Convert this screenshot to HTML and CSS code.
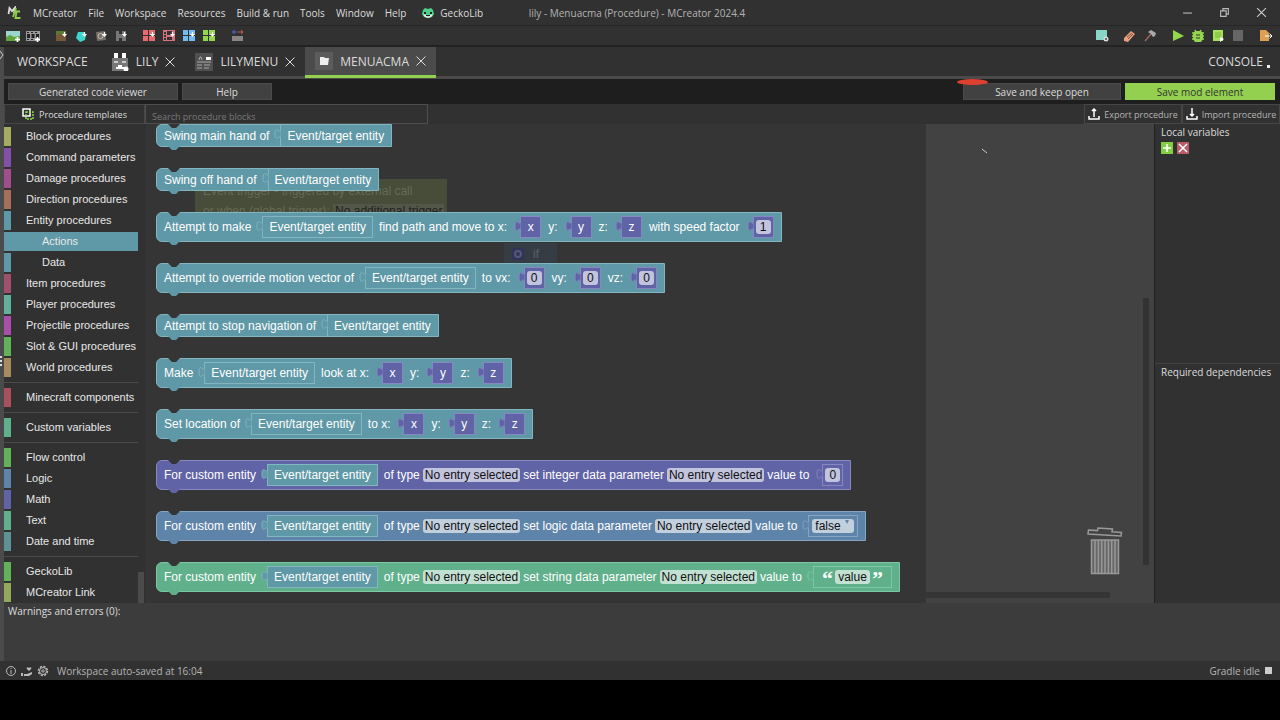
FILE: index.html
```html
<!DOCTYPE html>
<html lang="en">
<head>
  <meta charset="UTF-8"/>
  <meta name="viewport" content="width=device-width,initial-scale=1.0"/>
  <title>lily - Menuacma (Procedure) - MCreator 2024.4</title>
  <link rel="stylesheet" href="styles.css">
</head>
<body>

  <!-- shared shapes -->
  <svg class="defs">
    <symbol id="tab" viewBox="0 0 7 14"><path d="M6.500 0v2c0 6.500-5.500-5-5.500 5s5.500-1.500 5.500 5v2"/></symbol>
    <symbol id="close" viewBox="0 0 10 10"><path d="M.5.5l9 9M9.500.5l-9 9" fill="none" stroke="#ddd"/></symbol>
    <symbol id="plus" viewBox="0 0 6 6"><path d="M3 0v6M0 3h6" stroke="#fff" stroke-width="2"/></symbol>
    <symbol id="down" viewBox="0 0 6 6"><path d="M3 0v3" stroke="#fff" stroke-width="1.500"/><path d="M0 2.500h6L3 6z" fill="#fff"/></symbol>
  </svg>

  <div class="app">
    <header class="titlebar">
      <svg class="logo" viewBox="0 0 14 14"><path d="M1.500 8l1-6 2.500 3 3-3.500-1 6" fill="none" stroke="#ddd" stroke-width="1.800"/><path d="M9 2L6 11M13 5.500H9.500L8.500 12h5" fill="none" stroke="#8fd14a" stroke-width="1.800"/></svg>
      <nav class="menu">
        <a href="#">MCreator</a>
        <a href="#">File</a>
        <a href="#">Workspace</a>
        <a href="#">Resources</a>
        <a href="#">Build &amp; run</a>
        <a href="#">Tools</a>
        <a href="#">Window</a>
        <a href="#">Help</a>
        <a href="#" class="gecko"><svg viewBox="0 0 12 12"><path d="M1 3l2-2 3 1 3-1 2 2 1 4-2 3-4 1-4-1-2-3z" fill="#4fd08a"/><path d="M1 7l3 1 2 2 2-2 3-1-2 3-3 1-3-1z" fill="#eee"/><path d="M2 5h2v2H2zM8 5h2v2H8zM4 8h4v1H4z" fill="#222"/></svg>GeckoLib</a>
      </nav>
      <h1>lily - Menuacma (Procedure) - MCreator 2024.4</h1>
      <div class="window-buttons">
        <button aria-label="Minimize"><svg viewBox="0 0 10 10"><path d="M1 5.500h8" stroke="#bbb"/></svg></button>
        <button aria-label="Restore"><svg viewBox="0 0 10 10"><path d="M1.500 3.500h5v5h-5zM3.500 3.500v-2h5v5h-2" fill="none" stroke="#bbb"/></svg></button>
        <button aria-label="Close"><svg viewBox="0 0 10 10"><path d="M1 1l8 8M9 1L1 9" stroke="#ccc"/></svg></button>
      </div>
    </header>

    <div class="toolbar">
      <div class="tools">
        <svg viewBox="0 0 14 14"><path d="M0 2h14v10H0z" fill="#9ad5d0"/><path d="M0 8l4-2 4 2 6-1v5H0z" fill="#5fa53c"/><use href="#plus" x="9" y="8" width="5" height="5"/></svg>
        <svg viewBox="0 0 14 14"><path d="M0 2h14v10H0z" fill="#999"/><path d="M1 5h3v4H1zM5.500 5h3v4h-3zM10 5h3v4h-3zM1 3h2v1H1zM5 3h2v1H5zM9 3h2v1H9zM1 10h2v1H1zM5 10h2v1H5z" fill="#222"/><use href="#plus" x="9" y="8" width="5" height="5"/></svg>
      </div>
      <div class="tools">
        <svg viewBox="0 0 14 14"><path d="M2 2h10v10H2z" fill="#79583a"/><path d="M2 2h10v3H9v1H7V5H4v1H2z" fill="#5b7a35"/><use href="#down" x="8" y="3" width="5" height="5"/></svg>
        <svg viewBox="0 0 14 14"><path d="M4 3h6l2 3-1 5-5 2-4-4z" fill="#3fd5cf"/><use href="#down" x="8" y="3" width="5" height="5"/></svg>
        <svg viewBox="0 0 14 14"><path d="M2 3l9-1 1 9-9 1z" fill="#777069"/><circle cx="6.500" cy="7" r="2.500" fill="none" stroke="#c4bdb4"/><use href="#down" x="8" y="3" width="5" height="5"/></svg>
        <svg viewBox="0 0 14 14"><path d="M2 2h3v3h3V2h4v10H8V9H5v3H2z" fill="#777"/><use href="#down" x="8" y="3" width="5" height="5"/></svg>
      </div>
      <div class="tools">
        <svg viewBox="0 0 14 14"><path d="M1 1h5v5H1zM7 1h6v5H7zM1 7h5v5H1zM7 7h6v5H7z" fill="#e56b70"/><use href="#down" x="8" y="3" width="5" height="5"/></svg>
        <svg viewBox="0 0 14 14"><path d="M1 1h12v11H1z" fill="#d8727c"/><path d="M2 3h2v2H2zM5 2h5v4H5zM2 6h2v2H2zM5 8h5v3H5zM2 9h2v2H2z" fill="#333"/><use href="#down" x="8" y="3" width="5" height="5"/></svg>
        <svg viewBox="0 0 14 14"><path d="M1 1h5v5H1zM7 1h6v5H7zM1 7h5v5H1zM7 7h6v5H7z" fill="#72baf0"/><use href="#down" x="8" y="3" width="5" height="5"/></svg>
        <svg viewBox="0 0 14 14"><path d="M1 1h5v5H1zM7 1h6v5H7zM1 7h5v5H1zM7 7h6v5H7z" fill="#93d84c"/><use href="#down" x="8" y="3" width="5" height="5"/></svg>
      </div>
      <div class="tools">
        <svg viewBox="0 0 14 14"><path d="M2 7h11v5H2z" fill="#8b8484"/><path d="M7 3H3M4.500 1L2.500 3l2 2" fill="none" stroke="#5570e0"/><path d="M8 3h4M11 1l2 2-2 2" fill="none" stroke="#d85555"/></svg>
      </div>

      <div class="tools run">
        <svg viewBox="0 0 14 14"><path d="M1 1h11v10H1z" fill="#88d6c8"/><circle cx="11" cy="10" r="2.500" fill="#ddd"/><circle cx="11" cy="10" r="1" fill="#444"/></svg>
      </div>
      <div class="tools">
        <svg viewBox="0 0 14 14"><path d="M1 9l7-7 4 3-7 8-4-1z" fill="#e5a084"/><path d="M4 8l5-4M5 10l5-5" stroke="#8a4d38"/></svg>
        <svg viewBox="0 0 14 14"><path d="M2 12l6-7" stroke="#9b6657" stroke-width="1.500"/><path d="M5 3l3-2 5 3-1 3-2 1-2-3z" fill="#aaa"/></svg>
      </div>
      <div class="tools">
        <svg viewBox="0 0 14 14"><path d="M2 1l11 6L2 12z" fill="#93d84c"/></svg>
        <svg viewBox="0 0 14 14"><path d="M1 4h12M1 7h12M1 10h12M4 1l1 2M10 1L9 3" stroke="#93d84c" stroke-width="1.500"/><path d="M4 2h6l2 3v5l-2 3H4l-2-3V5z" fill="#93d84c"/><path d="M5 6h4M5 9h4" stroke="#333"/></svg>
        <svg viewBox="0 0 14 14"><path d="M2 1h10v11H2z" fill="#a5e35a"/><path d="M4 4h6M4 6h6M4 8h6" stroke="#79b33b"/><path d="M9 8l4 2-4 3z" fill="#fff"/></svg>
        <svg viewBox="0 0 14 14"><path d="M2 1h10v11H2z" fill="#666"/></svg>
      </div>
      <div class="tools">
        <svg viewBox="0 0 14 14"><path d="M1 1h6l3 3v8H1z" fill="#dda052"/><path d="M6 7h7M10.500 4.500L13 7l-2.500 2.500" fill="none" stroke="#fff"/></svg>
      </div>
    </div>

    <div class="body">
      <div class="gutter">
        <svg viewBox="0 0 4 10"><path d="M0 1l3 4-3 4" fill="none" stroke="#ccc"/></svg>
        <span></span>
      </div>
      <div class="content">
        <nav class="tabs">
          <a href="#" class="plain">WORKSPACE</a>
          <a href="#"><svg viewBox="0 0 18 18"><path d="M1 5h16v13H1z" fill="#777"/><path d="M3 0h4v5H3zM11 0h4v5h-4zM7 12h4v2h2v2H5v-2h2z" fill="#fff"/><path d="M3 8h4v2H3zM11 8h4v2h-4z" fill="#ccc"/><circle cx="15" cy="16" r="2.500" fill="#fff"/></svg>LILY<svg class="x"><use href="#close"/></svg></a>
          <a href="#"><svg viewBox="0 0 18 18"><path d="M0 0h18v18H0z" fill="#505050"/><path d="M11 4h5v3h-5z" fill="#fff"/><path d="M4 7l1-3h1l1 3M2 9h14M2 12h5M9 12h6M2 15h5M9 15h5" fill="none" stroke="#aaa"/></svg>LILYMENU<svg class="x"><use href="#close"/></svg></a>
          <a href="#" class="active"><svg viewBox="0 0 18 18"><path d="M0 0h18v18H0z" fill="#5c5c5c"/><path d="M5 5h4l1 1h4l-1 7H5z" fill="#eee"/></svg>MENUACMA<svg class="x"><use href="#close"/></svg></a>
          <a href="#" class="console">CONSOLE<i></i></a>
        </nav>

        <div class="actions">
          <button class="viewer">Generated code viewer</button>
          <button class="help">Help</button>
          <div class="keep">
            <button>Save and keep open</button>
            <span class="marker"></span>
          </div>
          <button class="save">Save mod element</button>
        </div>

        <div class="subbar">
          <button class="templates"><svg viewBox="0 0 12 12"><path d="M1 1h7v7H1z" fill="none" stroke="#fff" stroke-width="1.500"/><path d="M4 4h7v7H4z" fill="none" stroke="#93d84c" stroke-width="1.500" stroke-dasharray="2 1"/></svg>Procedure templates</button>
          <input type="text" aria-label="Search procedure blocks" placeholder="Search procedure blocks">
          <button class="port export"><svg viewBox="0 0 12 12"><path d="M1 8v3h10V8M6 9V1M4 3l2-2 2 2" fill="none" stroke="#fff" stroke-width="1.500"/></svg>Export procedure</button>
          <button class="port"><svg viewBox="0 0 12 12"><path d="M1 8v3h10V8M6 0v8M4 6l2 2 2-2" fill="none" stroke="#fff" stroke-width="1.500"/></svg>Import procedure</button>
        </div>

        <main class="editor">
          <nav class="toolbox">
            <a href="#" class="olive">Block procedures</a>
            <a href="#" class="purple">Command parameters</a>
            <a href="#" class="pink">Damage procedures</a>
            <a href="#" class="brown">Direction procedures</a>
            <a href="#" class="teal">Entity procedures</a>
            <a href="#" class="teal sub selected">Actions</a>
            <a href="#" class="teal sub">Data</a>
            <a href="#" class="rose">Item procedures</a>
            <a href="#" class="mint">Player procedures</a>
            <a href="#" class="magenta">Projectile procedures</a>
            <a href="#" class="green">Slot &amp; GUI procedures</a>
            <a href="#" class="tan">World procedures</a>
            <hr>
            <a href="#" class="red">Minecraft components</a>
            <hr>
            <a href="#" class="jade">Custom variables</a>
            <hr>
            <a href="#" class="green">Flow control</a>
            <a href="#" class="blue">Logic</a>
            <a href="#" class="indigo">Math</a>
            <a href="#" class="jade">Text</a>
            <a href="#" class="slate">Date and time</a>
            <hr>
            <a href="#" class="green">GeckoLib</a>
            <a href="#" class="moss">MCreator Link</a>
            <span class="thumb"></span>
          </nav>

          <section class="workspace">
            <div class="flyout">
              <div class="ghost event">
                <p>Event trigger - triggered by external call</p>
                <p>or when (global trigger): <span>No additional trigger</span></p>
              </div>
              <div class="ghost if"><svg viewBox="0 0 12 12"><rect width="12" height="12" rx="2" fill="#30345c"/><circle cx="6" cy="6" r="3" fill="none" stroke="#555a73" stroke-width="2"/></svg>if</div>

              <div class="block teal short">Swing main hand of
                <span class="value"><svg class="tab"><use href="#tab"/></svg>Event/target entity</span>
              </div>
              <div class="block teal short">Swing off hand of
                <span class="value"><svg class="tab"><use href="#tab"/></svg>Event/target entity</span>
              </div>
              <div class="block teal">Attempt to make
                <span class="value"><svg class="tab"><use href="#tab"/></svg>Event/target entity</span>
                find path and move to x:
                <span class="value small indigo"><svg class="tab"><use href="#tab"/></svg>x</span>
                y:
                <span class="value small indigo"><svg class="tab"><use href="#tab"/></svg>y</span>
                z:
                <span class="value small indigo"><svg class="tab"><use href="#tab"/></svg>z</span>
                with speed factor
                <span class="value small indigo"><svg class="tab"><use href="#tab"/></svg><input type="text" aria-label="speed factor" value="1"></span>
              </div>
              <div class="block teal">Attempt to override motion vector of
                <span class="value"><svg class="tab"><use href="#tab"/></svg>Event/target entity</span>
                to vx:
                <span class="value small indigo"><svg class="tab"><use href="#tab"/></svg><input type="text" aria-label="vx" value="0"></span>
                vy:
                <span class="value small indigo"><svg class="tab"><use href="#tab"/></svg><input type="text" aria-label="vy" value="0"></span>
                vz:
                <span class="value small indigo"><svg class="tab"><use href="#tab"/></svg><input type="text" aria-label="vz" value="0"></span>
              </div>
              <div class="block teal short">Attempt to stop navigation of
                <span class="value"><svg class="tab"><use href="#tab"/></svg>Event/target entity</span>
              </div>
              <div class="block teal">Make
                <span class="value"><svg class="tab"><use href="#tab"/></svg>Event/target entity</span>
                look at x:
                <span class="value small indigo"><svg class="tab"><use href="#tab"/></svg>x</span>
                y:
                <span class="value small indigo"><svg class="tab"><use href="#tab"/></svg>y</span>
                z:
                <span class="value small indigo"><svg class="tab"><use href="#tab"/></svg>z</span>
              </div>
              <div class="block teal">Set location of
                <span class="value"><svg class="tab"><use href="#tab"/></svg>Event/target entity</span>
                to x:
                <span class="value small indigo"><svg class="tab"><use href="#tab"/></svg>x</span>
                y:
                <span class="value small indigo"><svg class="tab"><use href="#tab"/></svg>y</span>
                z:
                <span class="value small indigo"><svg class="tab"><use href="#tab"/></svg>z</span>
              </div>
              <div class="block indigo">For custom entity
                <span class="value teal"><svg class="tab"><use href="#tab"/></svg>Event/target entity</span>
                of type
                <button class="field">No entry selected</button>
                set integer data parameter
                <button class="field">No entry selected</button>
                value to
                <span class="value small"><svg class="tab"><use href="#tab"/></svg><input type="text" aria-label="integer value" value="0"></span>
              </div>
              <div class="block blue">For custom entity
                <span class="value teal"><svg class="tab"><use href="#tab"/></svg>Event/target entity</span>
                of type
                <button class="field">No entry selected</button>
                set logic data parameter
                <button class="field">No entry selected</button>
                value to
                <span class="value bool"><svg class="tab"><use href="#tab"/></svg><select aria-label="logic value"><option>false</option><option>true</option></select><i></i></span>
              </div>
              <div class="block jade">For custom entity
                <span class="value teal"><svg class="tab"><use href="#tab"/></svg>Event/target entity</span>
                of type
                <button class="field">No entry selected</button>
                set string data parameter
                <button class="field">No entry selected</button>
                value to
                <span class="value string"><svg class="tab"><use href="#tab"/></svg><b>“</b><input type="text" aria-label="string value" value="value"><b>”</b></span>
              </div>
            </div>
            <span class="scroll-y"></span>
            <span class="scroll-x"></span>
            <svg class="stroke" viewBox="0 0 8 6"><path d="M1 1l5 4" stroke="#ccc"/></svg>
            <svg class="trash" viewBox="0 0 36 48"><path d="M1.500 3l9 .6.500-2.600 14.500 1-.5 2.800 9.500.7-.5 3.500-33-2z" fill="none" stroke="#999" stroke-width="1.500"/><path d="M4.500 13h27v33.500h-27z" fill="#666" stroke="#999" stroke-width="1.500"/><path d="M8 13v33M11.400 13v33M14.700 13v33M18 13v33M21.400 13v33M24.700 13v33M28 13v33" stroke="#999" stroke-width="1.500"/></svg>
          </section>

          <aside class="side">
            <section>
              <h2>Local variables</h2>
              <div class="side-buttons">
                <button aria-label="Add variable"><svg viewBox="0 0 12 12"><path d="M0 0h12v12H0z" fill="#84cc45"/><path d="M6 2v8M2 6h8" stroke="#fff" stroke-width="1.500"/></svg></button>
                <button aria-label="Remove variable"><svg viewBox="0 0 12 12"><path d="M0 0h12v12H0z" fill="#b85a68"/><path d="M2 2l8 8M10 2l-8 8" stroke="#fff" stroke-width="1.500"/></svg></button>
              </div>
            </section>
            <section>
              <h2>Required dependencies</h2>
            </section>
          </aside>
        </main>

        <div class="warnings">Warnings and errors (0):</div>
      </div>
    </div>

    <footer class="status">
      <svg viewBox="0 0 12 12"><circle cx="6" cy="6" r="4.500" fill="none" stroke="#bbb"/><path d="M6 5v4M6 3v1" stroke="#bbb"/></svg>
      <svg viewBox="0 0 12 12"><path d="M0 8h2v3H0zM3 9h3l5-2v2l-3 2H3z" fill="#bbb"/><path d="M8 6L5.500 3.500 6.500 2 8 3l1.500-1 1 1.500z" fill="#bbb"/></svg>
      <svg viewBox="0 0 12 12"><circle cx="6" cy="6" r="4.500" fill="none" stroke="#bbb" stroke-width="1.500" stroke-dasharray="2.200 1.300"/><circle cx="6" cy="6" r="3.500" fill="none" stroke="#bbb"/><circle cx="6" cy="6" r="1.200" fill="none" stroke="#bbb"/></svg>
      <span>Workspace auto-saved at 16:04</span>
      <span class="gradle">Gradle idle<i></i></span>
    </footer>
  </div>

</body>
</html>
```
FILE: styles.css
```css
:root {
  --bg:    #313131;
  --dark:  #1e1e1e;
  --line:  #4b4b4b;
  --green: #93d04f;
  --text:  #dcdcdc;
}
* {
  box-sizing: border-box;
  margin: 0;
  padding: 0;
}
body {
  font-family: "Open Sans", sans-serif;
  font-size: 10px;
  background: #000;
  color: var(--text);
  height: 100vh;
  padding-bottom: 40px;
}
a {
  color: inherit;
  text-decoration: none;
}
button,
input,
select {
  font: inherit;
  color: inherit;
  border: none;
  background: none;
  border-radius: 0;
}
svg {
  flex: none;
}
.defs {
  position: absolute;
  width: 0;
  height: 0;
}
.app {
  height: 100%;
  display: flex;
  flex-direction: column;
  background: var(--bg);
}

/* title bar */
.titlebar {
  height: 26px;
  display: grid;
  grid-template-columns: 1fr auto 1fr;
  align-items: center;
  padding: 0 13px 0 7px;
  border-bottom: 1px solid #262626;
}
.logo {
  width: 14px;
  height: 14px;
  grid-area: 1 / 1;
}
.menu {
  grid-area: 1 / 1;
  display: flex;
  align-items: center;
  gap: 11px;
  margin-left: 26px;
  white-space: nowrap;
}
.gecko {
  display: flex;
  align-items: center;
  gap: 6px;
  margin-left: 5px;
}
.gecko svg {
  width: 12px;
  height: 12px;
}
.titlebar h1 {
  grid-area: 1 / 2;
  font-size: 10px;
  font-weight: normal;
  color: #b4b4b4;
}
.window-buttons {
  grid-area: 1 / 3;
  justify-self: end;
  display: flex;
  gap: 26px;
}
.window-buttons button,
.window-buttons svg {
  display: block;
  width: 11px;
  height: 11px;
}

/* toolbar */
.toolbar {
  height: 21px;
  display: flex;
  align-items: center;
  gap: 14px;
  padding: 0 7px 0 6px;
  border-bottom: 2px solid #222;
}
.tools {
  display: flex;
  gap: 6px;
}
.tools svg {
  width: 14px;
  height: 14px;
}
.run {
  margin-left: auto;
}
.body {
  flex: 1;
  min-height: 0;
  display: flex;
}
.gutter {
  width: 4px;
  background: var(--line);
  display: flex;
  flex-direction: column;
  justify-content: space-between;
}
.gutter::after {
  content: "";
}
.gutter svg {
  width: 4px;
  height: 10px;
  margin-top: 3px;
}
.gutter span {
  width: 2px;
  height: 10px;
  background: repeating-linear-gradient(#ddd 0 2px, transparent 2px 4px);
}
.content {
  flex: 1;
  min-width: 0;
  display: flex;
  flex-direction: column;
}

/* tabs */
.tabs {
  height: 32px;
  display: flex;
  font-size: 12px;
  border-bottom: 3px solid var(--line);
}
.tabs a {
  height: 31px;
  display: flex;
  align-items: center;
  gap: 7px;
  padding: 0 10px 2px;
}
.tabs a.plain {
  padding: 0 13px 2px;
}
.tabs svg {
  width: 18px;
  height: 18px;
}
.tabs .x {
  width: 10px;
  height: 10px;
}
.tabs .active {
  background: var(--line);
  border-bottom: 3px solid var(--green);
  padding-bottom: 0;
}
.tabs .console {
  margin-left: auto;
  gap: 4px;
}
.console i {
  width: 3px;
  height: 3px;
  margin-top: 9px;
  background: #eee;
}

/* action buttons */
.actions {
  height: 25px;
  display: flex;
  align-items: center;
  gap: 4px;
  padding: 0 5px 0 4px;
  background: var(--dark);
}
.actions button {
  height: 17px;
  background: #414141;
  border: 1px solid #4a4a4a;
}
.actions .viewer {
  width: 170px;
}
.actions .help {
  width: 90px;
}
.keep {
  margin-left: auto;
  position: relative;
}
.keep button {
  width: 158px;
}
.marker {
  position: absolute;
  left: -6px;
  top: -4px;
  width: 31px;
  height: 6px;
  border-radius: 50%;
  background: #dd4030;
}
.actions .save {
  width: 150px;
  background: var(--green);
  border-color: var(--green);
  color: #333;
}
.subbar {
  height: 20px;
  display: flex;
}
.subbar button {
  display: flex;
  align-items: center;
  justify-content: center;
  border: 1px solid #464646;
  font-size: 9px;
}
.subbar svg {
  width: 12px;
  height: 12px;
}
.subbar .templates {
  width: 141px;
  gap: 5px;
}
.subbar input {
  width: 283px;
  padding: 4px 6px 0;
  border: 1px solid #4e4e4e;
  font-size: 9px;
}
.subbar input::placeholder {
  color: #777;
}
.subbar .port {
  width: 98px;
  gap: 4px;
  color: #b4b4b4;
}
.subbar .export {
  margin-left: auto;
}

/* block colours */
.teal    { --c: #5f98a6; --edge: #82b5c0; }
.indigo  { --c: #6063a5; --edge: #8788c2; }
.blue    { --c: #5f84a9; --edge: #84a5c3; }
.jade    { --c: #61b08c; --edge: #7cc8a5; }
.olive   { --c: #a5ab60; }
.purple  { --c: #844fa6; }
.pink    { --c: #a04f8c; }
.brown   { --c: #a5705b; }
.rose    { --c: #a04f6c; }
.mint    { --c: #60b29c; }
.magenta { --c: #a94faa; }
.green   { --c: #64b15c; }
.tan     { --c: #a68b5f; }
.red     { --c: #a9505f; }
.slate   { --c: #5f9296; }
.moss    { --c: #93a95e; }

/* editor */
.editor {
  flex: 1;
  min-height: 0;
  display: flex;
}
.toolbox {
  width: 142px;
  padding-top: 3px;
  display: flex;
  flex-direction: column;
  overflow: hidden;
  position: relative;
  font: 11px "Liberation Sans", sans-serif;
}
.toolbox a {
  flex: none;
  width: 134px;
  height: 19px;
  margin-bottom: 2px;
  padding-left: 15px;
  line-height: 19px;
  border-left: 7px solid var(--c);
  color: #e8e8e8;
}
.toolbox .sub {
  padding-left: 31px;
}
.toolbox .selected {
  background: var(--c);
}
.toolbox hr {
  flex: none;
  width: 134px;
  margin: 3px 0 5px;
  border: none;
  border-top: 1px solid #4b4b4b;
}
.toolbox .thumb {
  position: absolute;
  right: 2px;
  bottom: 0;
  width: 6px;
  height: 31px;
  background: var(--line);
}
.workspace {
  flex: 1;
  min-width: 0;
  position: relative;
  background: #424242;
  overflow: hidden;
}
.flyout {
  position: relative;
  width: 780px;
  height: 100%;
  padding-left: 10px;
  background: #353535;
  display: flex;
  flex-direction: column;
  align-items: flex-start;
  gap: 21px;
  font: 12px "Liberation Sans", sans-serif;
  white-space: nowrap;
  overflow: hidden;
}
.ghost {
  position: absolute;
  color: #666b58;
}
.event {
  left: 49px;
  top: 55px;
  width: 252px;
  height: 46px;
  padding: 5px 8px;
  line-height: 14px;
  background: #474d38;
}
.event p {
  margin-bottom: 6px;
}
.event span {
  padding: 0 2px;
  background: #525749;
  color: #1f1f1f;
}
.if {
  left: 358px;
  top: 119px;
  width: 53px;
  height: 22px;
  padding-left: 8px;
  display: flex;
  align-items: center;
  gap: 9px;
  background: #363c44;
  color: #596270;
}
.if svg {
  width: 12px;
  height: 12px;
}
.block {
  position: relative;
  flex: none;
  height: 30px;
  display: flex;
  align-items: center;
  padding: 0 7px;
  background: var(--c);
  border: 1px solid var(--edge);
  border-radius: 6px 0 0 6px;
  color: #fff;
}
.block.short {
  height: 23px;
}
/* notch on top, bump below */
.block::before,
.block::after {
  content: "";
  position: absolute;
  left: 11px;
  width: 12px;
  height: 4px;
  clip-path: polygon(0 0, 100% 0, 67% 100%, 33% 100%);
}
.block::before {
  top: -1px;
  background: #353535;
}
.block::after {
  bottom: -4px;
  background: var(--c);
}
.value {
  position: relative;
  height: 22px;
  display: flex;
  align-items: center;
  justify-content: center;
  margin: 0 6px 0 11px;
  padding: 0 6px;
  background: var(--c);
  border: 1px solid var(--edge);
}
.value.small {
  width: 21px;
  margin: 0 7px 0 13px;
  padding: 0;
}
.block > .value:last-child {
  margin-right: 0;
}
.short .value {
  height: 21px;
  padding-right: 0;
  border-width: 0 0 0 1px;
}
.tab {
  position: absolute;
  left: -7px;
  top: 2px;
  width: 7px;
  height: 14px;
  fill: var(--c);
  stroke: var(--edge);
}
.field,
.value input,
.value select {
  height: 14px;
  line-height: 14px;
  padding: 0 3px;
  border-radius: 3px;
  background: rgba(255,255,255,0.62);
  color: #111;
}
.field {
  margin: 0 3px;
  padding: 0 2px;
}
.value input {
  width: 15px;
  padding: 0;
  text-align: center;
}
.value.bool {
  padding: 0 3px;
}
.bool select {
  width: 42px;
  appearance: none;
}
.bool i {
  position: absolute;
  right: 8px;
  top: 4px;
  border: 2px solid transparent;
  border-top: 4px solid #5f84a9;
}
.value.string input {
  width: 35px;
}
.string b {
  width: 15px;
  height: 14px;
  font: bold 22px/18px "Liberation Serif", serif;
  text-align: center;
}
.scroll-y {
  position: absolute;
  right: 5px;
  top: 174px;
  bottom: 38px;
  width: 6px;
  background: #333;
}
.scroll-x {
  position: absolute;
  left: 780px;
  right: 44px;
  bottom: 5px;
  height: 6px;
  background: #353535;
}
.stroke {
  position: absolute;
  left: 835px;
  top: 24px;
  width: 8px;
  height: 6px;
}
.trash {
  position: absolute;
  right: 31px;
  bottom: 28px;
  width: 36px;
  height: 48px;
}

/* right column */
.side {
  width: 126px;
  display: flex;
  flex-direction: column;
  border-left: 1px solid #222;
}
.side section {
  flex: 1;
  padding: 0 6px;
  border-top: 1px solid #424242;
}
.side section:first-child {
  border-top: none;
}
.side h2 {
  font-size: 10px;
  font-weight: normal;
  line-height: 14px;
  margin: 1px 0 3px;
}
.side-buttons {
  display: flex;
  gap: 4px;
}
.side button,
.side svg {
  display: block;
  width: 12px;
  height: 12px;
}
.warnings {
  height: 58px;
  padding: 1px 4px;
  background: #3c3c3c;
}

/* status bar */
.status {
  height: 19px;
  display: flex;
  align-items: center;
  gap: 4px;
  padding: 0 8px 0 5px;
  color: #b4b4b4;
}
.status svg {
  width: 12px;
  height: 12px;
}
.status span {
  margin-left: 4px;
}
.status .gradle {
  margin-left: auto;
  display: flex;
  align-items: center;
  gap: 5px;
}
.gradle i {
  width: 7px;
  height: 7px;
  background: #ccc;
}
```
